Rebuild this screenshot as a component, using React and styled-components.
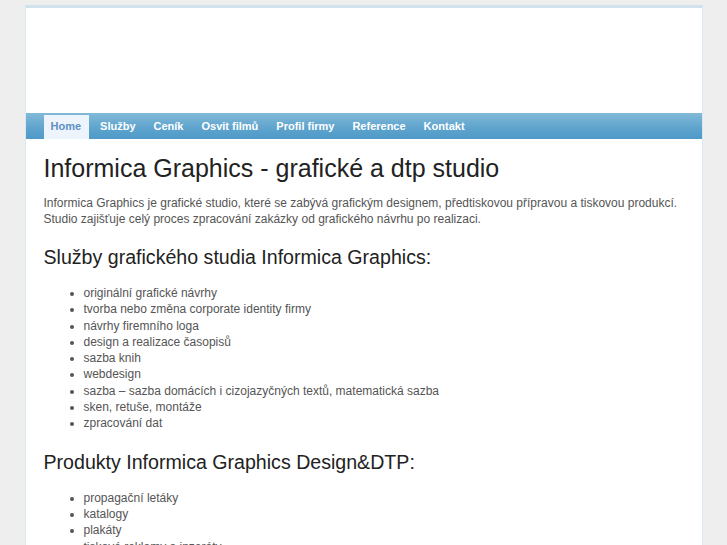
import React from 'react';
import styled, { createGlobalStyle } from 'styled-components';

const GlobalStyle = createGlobalStyle`
  html, body {
    margin: 0;
    padding: 0;
    background: #eeeeee;
    font-family: "Liberation Sans", Arial, sans-serif;
  }
`;

const menu = ['Home', 'Služby', 'Ceník', 'Osvit filmů', 'Profil firmy', 'Reference', 'Kontakt'];

const services = [
  'originální grafické návrhy',
  'tvorba nebo změna corporate identity firmy',
  'návrhy firemního loga',
  'design a realizace časopisů',
  'sazba knih',
  'webdesign',
  'sazba – sazba domácích i cizojazyčných textů, matematická sazba',
  'sken, retuše, montáže',
  'zpracování dat',
];

const products = [
  'propagační letáky',
  'katalogy',
  'plakáty',
  'tiskové reklamy a inzeráty',
  'výroční zprávy',
];

export default function App() {
  return (
    <>
      <GlobalStyle />
      <Page>
        <Header />
        <Nav>
          {menu.map((item, i) => (
            <NavItem key={item} active={i === 0}>{item}</NavItem>
          ))}
        </Nav>
        <Content>
          <Title>Informica Graphics - grafické a dtp studio</Title>
          <Text>
            Informica Graphics je grafické studio, které se zabývá grafickým designem, předtiskovou přípravou a tiskovou produkcí.
            Studio zajišťuje celý proces zpracování zakázky od grafického návrhu po realizaci.
          </Text>
          <Subtitle>Služby grafického studia Informica Graphics:</Subtitle>
          <List>
            {services.map(s => <li key={s}>{s}</li>)}
          </List>
          <Subtitle>Produkty Informica Graphics Design&amp;DTP:</Subtitle>
          <List>
            {products.map(s => <li key={s}>{s}</li>)}
          </List>
        </Content>
      </Page>
    </>
  );
}

const Page = styled.div`
  width: 676px;
  margin: 5px auto 0;
  background: #fff;
  border-top: 3px solid #cfe2ee;
  border-left: 1px solid #dbe8f1;
  border-right: 1px solid #dbe8f1;
  min-height: 600px;
`;

const Header = styled.div`
  height: 105px;
  background: #fff;
`;

const Nav = styled.ul`
  display: flex;
  align-items: flex-end;
  height: 26px;
  margin: 0;
  padding: 0 0 0 18px;
  list-style: none;
  background: linear-gradient(to bottom, #82b9d8 0%, #5da3cd 60%, #4f9ac8 100%);
`;

const NavItem = styled.li`
  height: 24px;
  line-height: 23px;
  padding: ${p => (p.active ? '0 8px 0 7px' : '0 9px')};
  margin-right: ${p => (p.active ? '2px' : '0')};
  font-size: 11px;
  font-weight: bold;
  color: ${p => (p.active ? '#5b90c4' : '#fff')};
  background: ${p => (p.active ? '#eef4fb' : 'transparent')};
`;

const Content = styled.div`
  padding: 15px 18px 0;
  color: #555;
`;

const Title = styled.h1`
  margin: 0 0 12px;
  font-size: 25px;
  font-weight: normal;
  color: #222;
`;

const Text = styled.p`
  margin: 0;
  font-size: 12px;
  line-height: 16px;
  color: #555;
`;

const Subtitle = styled.h2`
  margin: 19px 0 16px;
  font-size: 19.6px;
  font-weight: normal;
  color: #222;
`;

const List = styled.ul`
  margin: 0;
  padding-left: 40px;
  font-size: 12px;
  line-height: 16.3px;
  color: #555;
`;
